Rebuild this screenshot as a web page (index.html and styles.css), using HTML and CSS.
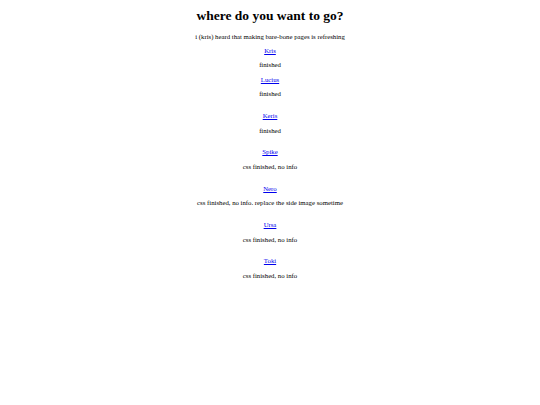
FILE: index.html
```html
<!DOCTYPE html>
<html>
<head>
<meta charset="utf-8">
<link rel="stylesheet" href="styles.css">
</head>
<body>
<main class="page">
  <h1 class="title">where do you want to go?</h1>
  <p class="line intro">i (kris) heard that making bare-bone pages is refreshing</p>
  <div class="group first">
    <a class="line link" href="#">Kris</a>
    <p class="line">finished</p>
    <a class="line link" href="#">Lucius</a>
    <p class="line">finished</p>
  </div>
  <div class="group">
    <a class="line link" href="#">Keris</a>
    <p class="line">finished</p>
  </div>
  <div class="group">
    <a class="line link" href="#">Spike</a>
    <p class="line">css finished, no info</p>
  </div>
  <div class="group">
    <a class="line link" href="#">Nero</a>
    <p class="line">css finished, no info. replace the side image sometime</p>
  </div>
  <div class="group">
    <a class="line link" href="#">Ursa</a>
    <p class="line">css finished, no info</p>
  </div>
  <div class="group">
    <a class="line link" href="#">Toki</a>
    <p class="line">css finished, no info</p>
  </div>
</main>
</body>
</html>
```

FILE: styles.css
```css
html, body {
  margin: 0;
  padding: 0;
  background: #ffffff;
}
body {
  font-family: "Liberation Serif", "Times New Roman", serif;
  font-size: 6.75px;
  color: #000000;
}
.page {
  display: flex;
  flex-direction: column;
  align-items: center;
  padding-top: 7px;
  text-align: center;
}
.title {
  margin: 0;
  font-size: 13.5px;
  line-height: 18px;
  font-weight: bold;
}
.line {
  display: block;
  margin: 0;
  line-height: 9px;
  height: 9px;
}
.intro {
  margin-top: 6.5px;
}
.group {
  display: flex;
  flex-direction: column;
  align-items: center;
  gap: 5.6px;
  margin-top: 12.75px;
}
.group.first {
  margin-top: 5px;
}
.link {
  color: #0000ee;
  text-decoration: underline;
}
```
